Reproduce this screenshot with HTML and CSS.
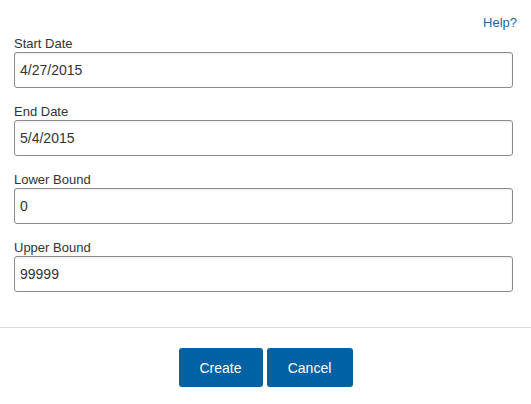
FILE: index.html
```html
<!DOCTYPE html>
<html>
<head>
<meta charset="utf-8">
<link rel="stylesheet" href="styles.css">
</head>
<body>
<div class="dialog">
  <div class="body">
    <div class="help-row"><a class="help" href="#">Help?</a></div>
    <div class="field">
      <label class="label">Start Date</label>
      <div class="input">4/27/2015</div>
    </div>
    <div class="field">
      <label class="label">End Date</label>
      <div class="input">5/4/2015</div>
    </div>
    <div class="field">
      <label class="label">Lower Bound</label>
      <div class="input">0</div>
    </div>
    <div class="field">
      <label class="label">Upper Bound</label>
      <div class="input">99999</div>
    </div>
  </div>
  <div class="footer">
    <button class="btn btn-create">Create</button>
    <button class="btn btn-cancel">Cancel</button>
  </div>
</div>
</body>
</html>
```
FILE: styles.css
```css
html, body {
  margin: 0;
  padding: 0;
  background: #fff;
}
body {
  font-family: "Liberation Sans", Arial, sans-serif;
  color: #333;
}
.dialog {
  width: 531px;
}
.body {
  padding: 15px 14px 0 14px;
}
.help-row {
  text-align: right;
  font-size: 13px;
  line-height: 16px;
  margin-bottom: 5px;
}
.help {
  color: #1a66b3;
  text-decoration: none;
}
.field {
  margin-right: 4px;
  margin-bottom: 16px;
}
.field:last-child {
  margin-bottom: 0;
}
.label {
  display: block;
  font-size: 13px;
  line-height: 16px;
  color: #333;
}
.input {
  box-sizing: border-box;
  height: 36px;
  border: 1px solid #8c8c8c;
  border-radius: 3px;
  box-shadow: inset 0 1px 2px rgba(0,0,0,0.08);
  padding: 0 5px;
  font-size: 14px;
  line-height: 35px;
  color: #333;
}
.footer {
  margin-top: 35px;
  border-top: 1px solid #ddd;
  padding-top: 20px;
  display: flex;
  justify-content: center;
  gap: 4px;
}
.btn {
  font-family: "Liberation Sans", Arial, sans-serif;
  font-size: 14px;
  height: 39px;
  padding: 0;
  background: #0062a3;
  color: #fff;
  border: none;
  border-radius: 3px;
}
.btn-create {
  width: 84px;
}
.btn-cancel {
  width: 86px;
}
```
